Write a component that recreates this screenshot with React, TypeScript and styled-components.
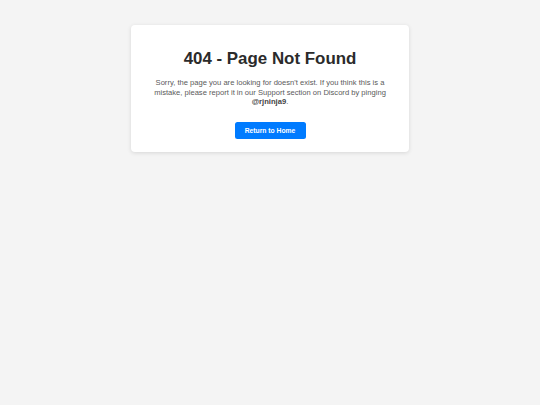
import React from "react";
import styled, { createGlobalStyle } from "styled-components";

const GlobalStyle = createGlobalStyle`
  html, body {
    margin: 0;
    padding: 0;
    background: #f4f4f4;
    font-family: "Liberation Sans", Arial, sans-serif;
  }
`;

const Page = styled.div`
  min-height: 405px;
  padding-top: 25px;
  box-sizing: border-box;
  display: flex;
  justify-content: center;
  align-items: flex-start;
`;

const Card = styled.div`
  width: 278px;
  box-sizing: border-box;
  background: #ffffff;
  border-radius: 4px;
  box-shadow: 0 1px 4px rgba(0, 0, 0, 0.12);
  padding: 24px 20px 13px;
  display: flex;
  flex-direction: column;
  align-items: center;
  text-align: center;
`;

const Title = styled.h1`
  margin: 0;
  font-size: 16.9px;
  line-height: 19.4px;
  font-weight: 700;
  color: #2b2b2b;
`;

const Message = styled.p`
  margin: 10px 0 0;
  font-size: 7.6px;
  line-height: 9.1px;
  color: #5a5a5a;
`;

const Handle = styled.strong`
  font-weight: 700;
  color: #444444;
`;

const HomeButton = styled.a`
  margin-top: 16px;
  display: inline-flex;
  align-items: center;
  justify-content: center;
  width: 71px;
  height: 17px;
  box-sizing: border-box;
  background: #007bff;
  color: #ffffff;
  border-radius: 2.5px;
  font-size: 6.75px;
  font-weight: 700;
  text-decoration: none;
`;

export default function App() {
  return (
    <>
      <GlobalStyle />
      <Page>
        <Card>
          <Title>404 - Page Not Found</Title>
          <Message>
            Sorry, the page you are looking for doesn't exist. If you think this is a
            mistake, please report it in our Support section on Discord by pinging{" "}
            <Handle>@rjninja9</Handle>.
          </Message>
          <HomeButton href="#">Return to Home</HomeButton>
        </Card>
      </Page>
    </>
  );
}
